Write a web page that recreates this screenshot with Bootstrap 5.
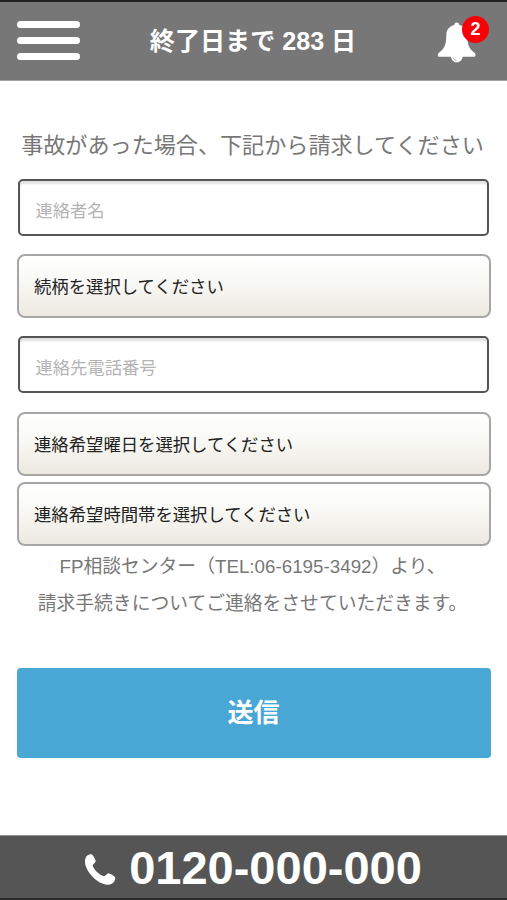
<!DOCTYPE html>
<html lang="ja">
<head>
<meta charset="utf-8">
<meta name="viewport" content="width=device-width, initial-scale=1">
<title>事故請求</title>
<link href="https://cdn.jsdelivr.net/npm/bootstrap@5.3.0/dist/css/bootstrap.min.css" rel="stylesheet">
<style>
body { font-family: "Liberation Sans", "Noto Sans CJK JP", sans-serif; color: #777; height: 900px; overflow: hidden; }
.top-bar { height: 81px; background: #777; border-top: 2px solid #232323; border-bottom: 1px solid #a5a5a5; padding: 0 18px 2px 17px; }
.menu-btn { width: 63px; height: 39px; }
.menu-btn span { display: block; height: 7px; border-radius: 3.5px; background: #fff; }
.top-title { font-size: 25.1px; line-height: 36px; margin: 2px 11px 0 0; }
.bell-btn { width: 52px; height: 52px; }
.bell-count { top: 2px; right: 0; width: 27px; height: 27px; background: #f80006; font-size: 18px; line-height: 27px; }
.main-area { padding: 47px 16.5px 0; }
.lead-text { font-size: 22.1px; line-height: 36px; margin: 0 -5px 15px -7px; }
.text-field.form-control { height: 57px; width: auto; align-self: stretch; margin: 0 1.5px 0 1px; padding: 7px 16px 0; border: 2px solid #555557; border-radius: 5px; font-size: 17.3px; box-shadow: inset 0 3px 2px #e2e2e2; }
.text-field::placeholder { color: #b4b4b4; opacity: 1; }
.choice-btn.btn { height: 64px; padding: 2px 15.5px 0; border: 2px solid #a6a6a6; border-radius: 8px; background: linear-gradient(#fff, #f9f9f6 40%, #ece9e1); font-size: 17.35px; color: #222; }
.gap-wide { margin-top: 18px; margin-bottom: 18px; }
.gap-tight { margin-top: 19px; margin-bottom: 6px; }
.note-text { font-size: 18.8px; line-height: 37px; margin: 2px 2px 0 0; }
.send-btn.btn { height: 90px; margin-top: 46px; border: 0; border-radius: 4px; background: #49a7d6; font-size: 26px; color: #fff; }
.tel-bar { height: 65px; background: #555; border-top: 1px solid #909090; border-bottom: 2px solid #29292a; font-size: 47px; line-height: 60px; padding: 2px 2px 0 0; }
.tel-icon { margin: 2px 13px 0 0; }
</style>
<script src="https://cdn.jsdelivr.net/npm/bootstrap@5.3.0/dist/js/bootstrap.bundle.min.js"></script>
</head>
<body class="d-flex flex-column bg-white">
<header class="top-bar d-flex align-items-center justify-content-between flex-shrink-0 text-white">
  <div class="menu-btn d-flex flex-column justify-content-between" role="button" aria-label="メニュー"><span></span><span></span><span></span></div>
  <h1 class="top-title fw-bold text-nowrap">終了日まで 283 日</h1>
  <div class="bell-btn position-relative" role="button" aria-label="お知らせ">
    <svg width="41" height="42" viewBox="0 0 40 42" preserveAspectRatio="none" style="margin-top:7px" aria-hidden="true">
      <path d="M19.300 1.500c1.500 0 2.400 1 2.400 2.400 5 1.200 7.800 5.100 7.800 9.600 0 10.500 1.800 14 7.200 18.400 1.500 1.400 1 3.900-.9 3.900H2.500c-2 0-2.300-2.500-.8-3.900C7.300 27.500 9.100 24 9.100 13.500c0-4.500 2.800-8.400 7.800-9.600 0-1.400.9-2.400 2.400-2.400z" fill="#fff"/>
      <path d="M13.500 34h11.600c0 4.200-2 7.300-5.800 7.300S13.500 38.200 13.500 34z" fill="#fff"/>
      <path d="M15.700 36.700c.4 1.500 1.500 2.300 3.100 2.600" fill="none" stroke="#888" stroke-width=".8"/>
    </svg>
    <span class="bell-count position-absolute rounded-circle text-center fw-bold">2</span>
  </div>
</header>
<main class="main-area d-flex flex-column flex-grow-1">
  <p class="lead-text text-center text-nowrap">事故があった場合、下記から請求してください</p>
  <form class="d-flex flex-column">
    <input class="form-control text-field" type="text" placeholder="連絡者名">
    <button class="btn choice-btn gap-wide text-start" type="button">続柄を選択してください</button>
    <input class="form-control text-field" type="tel" placeholder="連絡先電話番号">
    <button class="btn choice-btn gap-tight text-start" type="button">連絡希望曜日を選択してください</button>
    <button class="btn choice-btn text-start" type="button">連絡希望時間帯を選択してください</button>
    <p class="note-text text-center text-nowrap">FP相談センター（TEL:06-6195-3492）より、<br>請求手続きについてご連絡をさせていただきます。</p>
    <button class="btn send-btn fw-bold" type="button">送信</button>
  </form>
</main>
<footer class="tel-bar d-flex align-items-center justify-content-center flex-shrink-0 fw-bold text-white">
  <svg width="33" height="33" viewBox="0 0 33 33" class="tel-icon" aria-hidden="true">
    <path d="M3.300 3.500C5 1.700 7 .9 8.500 1.300c1.600.6 3.900 5 4.200 6.700.2 1.500-3.200 3.100-3.100 4.600.8 3.700 7 9.800 11.200 10.600 1.800.2 3.200-3.200 4.900-3 1.900.4 5.900 2.900 6.400 4.300.7 1.900-1.200 5.100-3.300 6.200C17.500 36.500-3.500 14.800 3.300 3.500z" fill="#fff"/>
  </svg>
  <span>0120-000-000</span>
</footer>
</body>
</html>
